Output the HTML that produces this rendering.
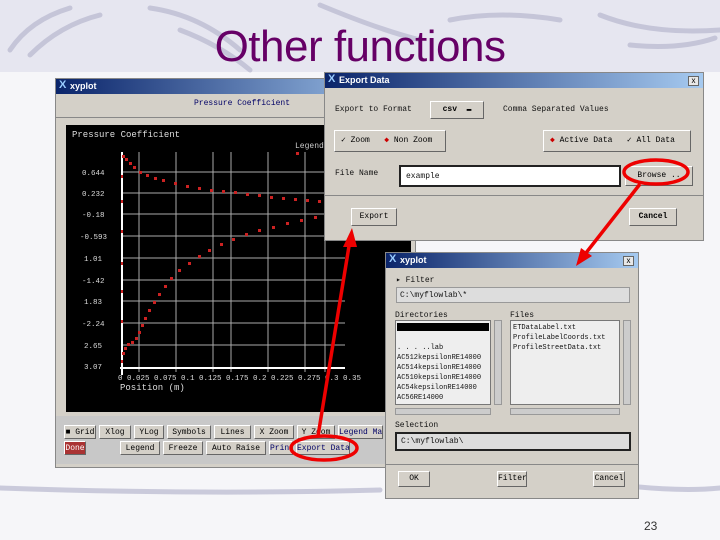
<!DOCTYPE html>
<html><head><meta charset="utf-8"><style>
*{margin:0;padding:0;box-sizing:border-box}
body{width:720px;height:540px;overflow:hidden;background:#f6f6f9;position:relative;font-family:"Liberation Mono",monospace;}
.abs{position:absolute}
.top{left:0;top:0;width:720px;height:72px;background:#e6e6f0}
.title{left:0;width:720px;top:22px;text-align:center;font-family:"Liberation Sans",sans-serif;font-size:44px;color:#660066;letter-spacing:-0.5px}
.win{background:#d4d0c8;border:1px solid #888}
.tb{position:absolute;left:0;right:0;top:0;height:15px;background:linear-gradient(90deg,#0a246a,#a6caf0);color:#fff;font:bold 9px "Liberation Sans",sans-serif;padding:2px 0 0 14px}
.tb:before{content:"X";position:absolute;left:3px;top:0;color:#9cf;font-weight:bold;font-size:11px}
.btn{position:absolute;background:#d4d0c8;border:1px solid;border-color:#fff #666 #666 #fff;font-size:8px;color:#000;text-align:center;line-height:14px;white-space:nowrap;overflow:hidden}
.t{position:absolute;font-size:8px;color:#111;white-space:nowrap}
.field{position:absolute;background:#fff;border:2px solid #222}
.x{position:absolute;width:11px;height:10px;border:1px solid #666;background:#e8e8e8;font:8px sans-serif;line-height:8px;text-align:center}
</style></head><body>
<div class="abs top"></div>
<svg class="abs" style="left:0;top:0" width="720" height="540">
<g stroke="#b8b8cf" stroke-width="5" fill="none" stroke-linecap="round" opacity=".7">
<path d="M10 50 Q30 20 70 8"/><path d="M30 55 Q60 25 100 15"/><path d="M150 8 Q200 15 240 50"/><path d="M180 30 Q220 45 250 70"/><path d="M320 5 Q380 30 420 40"/><path d="M450 20 Q500 10 560 20"/><path d="M600 15 Q650 35 720 30"/><path d="M630 45 Q680 50 715 38"/>
<path d="M0 488 Q200 495 380 490"/><path d="M620 485 Q680 492 720 488"/>
</g></svg>
<div class="abs title">Other functions</div>

<!-- xyplot main -->
<div class="abs win" style="left:55px;top:78px;width:361px;height:390px">
<div class="tb">xyplot</div>
<div class="t" style="left:138px;top:20px;color:#006">Pressure Coefficient</div>
<div class="abs" style="left:0;right:0;top:38px;border-top:1px solid #888"></div>
<div class="abs" style="left:10px;top:46px;width:345px;height:287px;background:#000"></div>
<div class="abs" style="left:0;right:0;top:337px;height:48px;background:#c8c8c8"></div>
</div>
<svg class="abs" style="left:0;top:0" width="720" height="540">
<text x="72" y="137" fill="#ddd" font-size="9" font-family="Liberation Mono">Pressure Coefficient</text>
<text x="295" y="148" fill="#ccc" font-size="8" font-family="Liberation Mono">Legend</text>
<g stroke="#aaa" stroke-width="1">
<line x1="122" y1="172" x2="345" y2="172"/><line x1="122" y1="193" x2="345" y2="193"/><line x1="122" y1="214" x2="345" y2="214"/><line x1="122" y1="236" x2="345" y2="236"/><line x1="122" y1="258" x2="345" y2="258"/><line x1="122" y1="280" x2="345" y2="280"/><line x1="122" y1="301" x2="345" y2="301"/><line x1="122" y1="323" x2="345" y2="323"/><line x1="122" y1="345" x2="345" y2="345"/>
<line x1="139" y1="152" x2="139" y2="372"/><line x1="176" y1="152" x2="176" y2="372"/><line x1="213" y1="152" x2="213" y2="372"/><line x1="231" y1="152" x2="231" y2="372"/><line x1="268" y1="152" x2="268" y2="372"/><line x1="305" y1="152" x2="305" y2="372"/><line x1="325" y1="160" x2="325" y2="372"/>
</g>
<line x1="122" y1="152" x2="122" y2="375" stroke="#fff" stroke-width="2"/>
<line x1="120" y1="368" x2="345" y2="368" stroke="#fff" stroke-width="2"/>
<g fill="#ddd" font-size="7.5" font-family="Liberation Mono">
<text x="82" y="175">0.644</text><text x="82" y="196">0.232</text><text x="82" y="217">-0.18</text><text x="80" y="239">-0.593</text><text x="84" y="261">1.01</text><text x="82" y="283">-1.42</text><text x="84" y="304">1.83</text><text x="82" y="326">-2.24</text><text x="84" y="348">2.65</text><text x="84" y="369">3.07</text>
<text x="118" y="380">0 0.025  0.075 0.1 0.125  0.175 0.2 0.225  0.275 0.3 0.35</text>
<text x="120" y="390" font-size="9">Position (m)</text></g>
<g fill="#c22">
<rect x="296" y="152" width="3" height="3"/>
<path d="M122 155h3v3h-3zM125 158h3v3h-3zM129 162h3v3h-3zM133 166h3v3h-3zM139 171h3v3h-3zM146 174h3v3h-3zM154 177h3v3h-3zM162 179h3v3h-3zM174 182h3v3h-3zM186 185h3v3h-3zM198 187h3v3h-3zM210 189h3v3h-3zM222 190h3v3h-3zM234 191h3v3h-3zM246 193h3v3h-3zM258 194h3v3h-3zM270 196h3v3h-3zM282 197h3v3h-3zM294 198h3v3h-3zM306 199h3v3h-3zM318 200h3v3h-3zM330 201h3v3h-3z"/>
<path d="M122 352h3v3h-3zM124 347h3v3h-3zM127 343h3v3h-3zM131 341h3v3h-3zM135 337h3v3h-3zM138 331h3v3h-3zM141 324h3v3h-3zM144 317h3v3h-3zM148 309h3v3h-3zM153 301h3v3h-3zM158 293h3v3h-3zM164 285h3v3h-3zM170 277h3v3h-3zM178 269h3v3h-3zM188 262h3v3h-3zM198 255h3v3h-3zM208 249h3v3h-3zM220 243h3v3h-3zM232 238h3v3h-3zM245 233h3v3h-3zM258 229h3v3h-3zM272 226h3v3h-3zM286 222h3v3h-3zM300 219h3v3h-3zM314 216h3v3h-3zM328 213h3v3h-3z"/>
<path d="M121 175h2v3h-2zM121 200h2v3h-2zM121 230h2v3h-2zM121 262h2v3h-2zM121 290h2v3h-2zM121 320h2v3h-2zM121 360h2v3h-2z"/>
</g></svg>
<!-- bottom buttons main -->
<div class="btn" style="left:64px;top:425px;width:32px;height:14px">&#9632; Grid</div>
<div class="btn" style="left:99px;top:425px;width:32px;height:14px">Xlog</div>
<div class="btn" style="left:134px;top:425px;width:30px;height:14px">YLog</div>
<div class="btn" style="left:167px;top:425px;width:44px;height:14px">Symbols</div>
<div class="btn" style="left:214px;top:425px;width:37px;height:14px">Lines</div>
<div class="btn" style="left:254px;top:425px;width:40px;height:14px">X Zoom</div>
<div class="btn" style="left:297px;top:425px;width:38px;height:14px">Y Zoom</div>
<div class="btn" style="left:338px;top:425px;width:45px;height:14px;color:#006">Legend Max</div>
<div class="btn" style="left:64px;top:441px;width:22px;height:14px;background:#a33;color:#fff">Done</div>
<div class="btn" style="left:120px;top:441px;width:40px;height:14px">Legend</div>
<div class="btn" style="left:163px;top:441px;width:40px;height:14px">Freeze</div>
<div class="btn" style="left:206px;top:441px;width:60px;height:14px">Auto Raise</div>
<div class="btn" style="left:269px;top:441px;width:24px;height:14px;color:#006">Print</div>
<div class="btn" style="left:296px;top:441px;width:54px;height:14px;color:#006">Export Data</div>

<!-- Export Data -->
<div class="abs win" style="left:324px;top:72px;width:380px;height:169px">
<div class="tb">Export Data</div><div class="x" style="right:4px;top:3px">x</div>
<div class="t" style="left:10px;top:32px">Export to Format</div>
<div class="btn" style="left:105px;top:28px;width:54px;height:18px;line-height:16px;font-weight:bold">csv &nbsp;&#9644;</div>
<div class="t" style="left:178px;top:32px">Comma Separated Values</div>
<div class="btn" style="left:9px;top:57px;width:112px;height:22px;line-height:20px;text-align:left;padding-left:6px">&#10003; Zoom &nbsp;&nbsp;<span style="color:#c00">&#9670;</span> Non Zoom</div>
<div class="btn" style="left:218px;top:57px;width:148px;height:22px;line-height:20px;text-align:left;padding-left:6px"><span style="color:#c00">&#9670;</span> Active Data &nbsp;&nbsp;&#10003; All Data</div>
<div class="t" style="left:10px;top:96px">File Name</div>
<div class="field" style="left:74px;top:92px;width:222px;height:22px"><span class="t" style="left:5px;top:5px">example</span></div>
<div class="btn" style="left:300px;top:93px;width:68px;height:20px;line-height:18px">Browse ..</div>
<div class="abs" style="left:0;right:0;top:122px;border-top:1px solid #888"></div>
<div class="btn" style="left:26px;top:135px;width:46px;height:18px;line-height:16px">Export</div>
<div class="btn" style="left:304px;top:135px;width:48px;height:18px;line-height:16px;font-weight:bold">Cancel</div>
</div>

<!-- File dialog -->
<div class="abs win" style="left:385px;top:252px;width:254px;height:247px">
<div class="tb">xyplot</div><div class="x" style="right:4px;top:3px">x</div>
<div class="t" style="left:10px;top:22px">&#9656; Filter</div>
<div class="abs" style="left:10px;top:34px;width:234px;height:16px;border:1px solid #999;background:#ddd"><span class="t" style="left:3px;top:3px">C:\myflowlab\*</span></div>
<div class="t" style="left:9px;top:58px">Directories</div>
<div class="t" style="left:124px;top:58px">Files</div>
<div class="abs" style="left:9px;top:67px;width:96px;height:85px;background:#eee;border:1px solid #777"></div>
<div class="abs" style="left:11px;top:70px;width:92px;height:8px;background:#000"></div>
<div class="t" style="left:11px;top:90px;font-size:7px;line-height:10px">. . . ..lab<br>AC512kepsilonRE14000<br>AC514kepsilonRE14000<br>AC510kepsilonRE14000<br>AC54kepsilonRE14000<br>AC56RE14000</div>
<div class="abs" style="left:108px;top:67px;width:8px;height:85px;background:#ccc;border:1px solid #999"></div>
<div class="abs" style="left:124px;top:67px;width:110px;height:85px;background:#eee;border:1px solid #777"></div>
<div class="t" style="left:127px;top:70px;font-size:7px;line-height:10px">ETDataLabel.txt<br>ProfileLabelCoords.txt<br>ProfileStreetData.txt</div>
<div class="abs" style="left:237px;top:67px;width:8px;height:85px;background:#ccc;border:1px solid #999"></div>
<div class="abs" style="left:9px;top:155px;width:96px;height:7px;background:#ccc;border:1px solid #999"></div>
<div class="abs" style="left:124px;top:155px;width:110px;height:7px;background:#ccc;border:1px solid #999"></div>
<div class="t" style="left:9px;top:168px">Selection</div>
<div class="field" style="left:9px;top:179px;width:236px;height:19px;background:#ddd"><span class="t" style="left:4px;top:3px">C:\myflowlab\</span></div>
<div class="abs" style="left:0;right:0;top:211px;border-top:1px solid #888"></div>
<div class="btn" style="left:12px;top:218px;width:32px;height:16px">OK</div>
<div class="btn" style="left:111px;top:218px;width:30px;height:16px">Filter</div>
<div class="btn" style="left:207px;top:218px;width:32px;height:16px">Cancel</div>
</div>

<svg class="abs" style="left:0;top:0" width="720" height="540">
<g stroke="#e00" stroke-width="3.5" fill="none">
<ellipse cx="324" cy="448" rx="33" ry="12"/>
<ellipse cx="656" cy="172" rx="32" ry="12"/>
<line x1="318" y1="436" x2="350" y2="240"/>
<line x1="640" y1="184" x2="582" y2="258"/>
</g>
<g fill="#e00"><polygon points="352,228 343,247 357,247"/><polygon points="576,266 581,248 592,256"/></g>
<text x="644" y="530" font-size="12" fill="#333" font-family="Liberation Sans">23</text>
</svg>
</body></html>
